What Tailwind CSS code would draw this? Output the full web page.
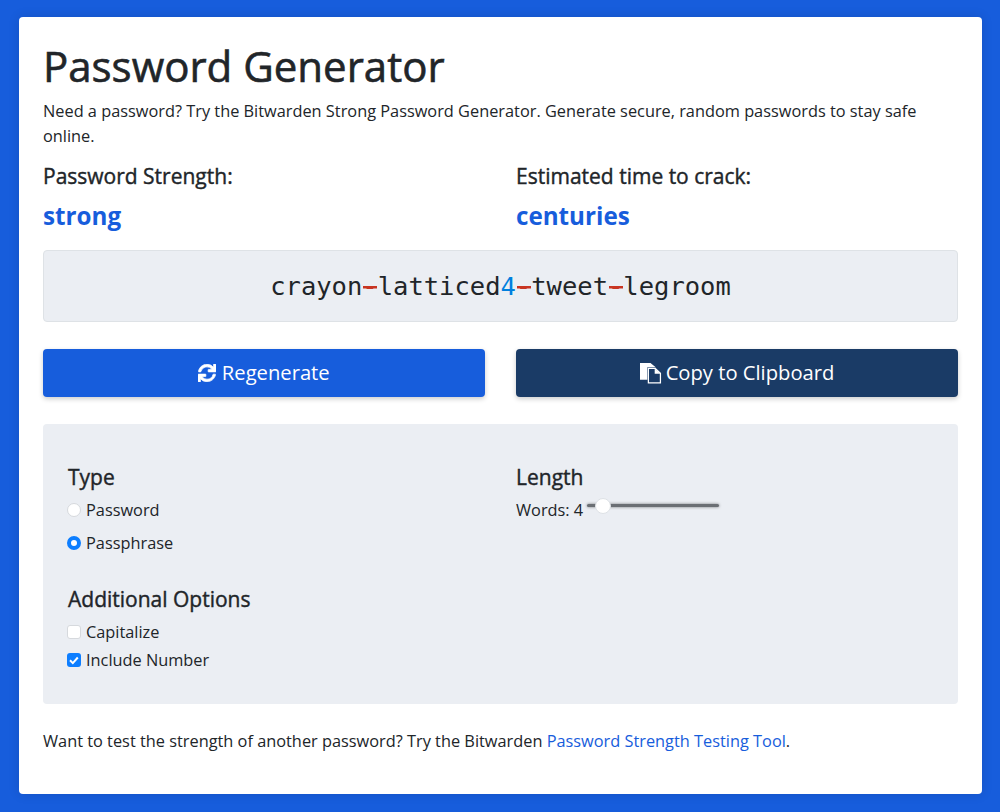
<!DOCTYPE html>
<html lang="en">

<head>
    <meta charset="UTF-8">
    <meta name="viewport" content="width=device-width, initial-scale=1.0">
    <title>Password Generator</title>
    <script src="https://cdn.jsdelivr.net/npm/@tailwindcss/browser@4"></script>
</head>

<body class="bg-[#175ddc] font-['Open_Sans',sans-serif] text-[#212529] text-[16.33px] leading-[24.5px]">

    <div class="pl-[19px] pr-[18px] pt-[17px] pb-[18px]">
        <div class="bg-white rounded-[4px] shadow-[0_0_12px_rgba(0,0,0,0.12)] px-[24px] pt-[25px] h-[777px]">
            <h1 class="text-[42px] leading-[48px] font-normal [-webkit-text-stroke:0.6px]">Password Generator</h1>
            <p class="mt-[9px]">Need a password? Try the Bitwarden Strong Password Generator. Generate secure, random passwords to stay safe online.</p>

            <div class="grid grid-cols-2 gap-x-[31px] mt-[13px]">
                <div>
                    <h3 class="text-[21px] leading-[30px] font-normal [-webkit-text-stroke:0.4px]">Password Strength:</h3>
                    <div class="text-[24.2px] leading-[36px] font-bold text-[#175ddc] mt-[7px]">strong</div>
                </div>
                <div>
                    <h3 class="text-[21px] leading-[30px] font-normal [-webkit-text-stroke:0.4px]">Estimated time to crack:</h3>
                    <div class="text-[24.2px] leading-[36px] font-bold text-[#175ddc] mt-[7px]">centuries</div>
                </div>
            </div>

            <div class="mt-[16px] h-[72px] flex items-center justify-center bg-[#ebeef3] border border-[#dee2e6] rounded-[4px] font-['DejaVu_Sans_Mono',monospace] text-[25.5px]">
                <span>crayon<span class="text-[#c83522] bg-[linear-gradient(#c83522,#c83522)] bg-no-repeat bg-[position:center_15.5px] bg-[length:14px_2.5px]">-</span>latticed<span class="text-[#007fde]">4</span><span class="text-[#c83522] bg-[linear-gradient(#c83522,#c83522)] bg-no-repeat bg-[position:center_15.5px] bg-[length:14px_2.5px]">-</span>tweet<span class="text-[#c83522] bg-[linear-gradient(#c83522,#c83522)] bg-no-repeat bg-[position:center_15.5px] bg-[length:14px_2.5px]">-</span>legroom</span>
            </div>

            <div class="grid grid-cols-2 gap-x-[31px] mt-[27px]">
                <button class="h-[48px] pb-[2px] flex items-center justify-center gap-[5.5px] bg-[#175ddc] text-white text-[20.2px] rounded-[4px] shadow-[0_2px_5px_rgba(0,0,0,0.2)]">
                    <svg class="mt-[2px] w-[18px] h-[18px]" viewBox="0 0 512 512" fill="currentColor" stroke="currentColor" stroke-width="20"><path d="M440.65 12.57l4 82.77A247.16 247.16 0 0 0 255.83 8C134.73 8 33.91 94.92 12.29 209.82A12 12 0 0 0 24.09 224h49.05a12 12 0 0 0 11.67-9.26 175.91 175.91 0 0 1 317-56.94l-101.46-4.86a12 12 0 0 0-12.57 12v47.41a12 12 0 0 0 12 12H500a12 12 0 0 0 12-12V12a12 12 0 0 0-12-12h-47.37a12 12 0 0 0-11.98 12.57zM255.83 432a175.61 175.61 0 0 1-146-77.8l101.8 4.87a12 12 0 0 0 12.57-12v-47.4a12 12 0 0 0-12-12H12a12 12 0 0 0-12 12V500a12 12 0 0 0 12 12h47.35a12 12 0 0 0 12-12.6l-4.15-82.57A247.17 247.17 0 0 0 255.83 504c121.11 0 221.93-86.92 243.55-201.82a12 12 0 0 0-11.8-14.18h-49.05a12 12 0 0 0-11.67 9.26A175.86 175.86 0 0 1 255.83 432z"/></svg>
                    Regenerate
                </button>
                <button class="h-[48px] pb-[2px] flex items-center justify-center gap-[4px] bg-[#1a3b66] text-white text-[20.2px] rounded-[4px] shadow-[0_2px_5px_rgba(0,0,0,0.2)]">
                    <svg class="mt-[2px] w-[22px] h-[22px]" viewBox="0 0 21 21"><path fill="currentColor" d="M0 1h10l5 4v12H0z"/><path fill="#1a3b66" d="M7 5h8l5.500 5.500V21H7z"/><path fill="#1a3b66" stroke="currentColor" stroke-width="1.200" d="M8 6h6.500l5 4.800V20H8z"/><path fill="currentColor" d="M14 6l5.500 5.200H14z"/></svg>
                    Copy to Clipboard
                </button>
            </div>

            <div class="mt-[27px] h-[280px] bg-[#ebeef3] rounded-[4px] px-[25px] pt-[38px]">
                <div class="grid grid-cols-2 gap-x-[31px]">
                    <div>
                        <h4 class="text-[21px] leading-[30px] font-normal [-webkit-text-stroke:0.4px]">Type</h4>
                        <label class="flex items-center gap-[5px] mt-[6px] h-[24px]">
                            <input type="radio" name="type" class="appearance-none -ml-[1px] w-[14px] h-[14px] rounded-full bg-white border border-[#d6d9dd]">
                            Password
                        </label>
                        <label class="flex items-center gap-[5px] mt-[9px] h-[24px]">
                            <input type="radio" name="type" checked class="appearance-none -ml-[1px] w-[14px] h-[14px] rounded-full bg-white border-[4px] border-[#0d7eff]">
                            Passphrase
                        </label>
                    </div>
                    <div>
                        <h4 class="text-[21px] leading-[30px] font-normal [-webkit-text-stroke:0.4px]">Length</h4>
                        <label class="flex items-center gap-[4px] mt-[6px] h-[24px]">
                            Words: 4
                            <input type="range" min="3" max="20" value="4" class="appearance-none w-[132px] h-[3px] -mt-[9px] rounded-full bg-[#6b6f74] shadow-[0_0_3px_rgba(0,0,0,0.5)] [&::-webkit-slider-thumb]:appearance-none [&::-webkit-slider-thumb]:mt-[1px] [&::-webkit-slider-thumb]:ml-[1px] [&::-webkit-slider-thumb]:w-[16px] [&::-webkit-slider-thumb]:h-[16px] [&::-webkit-slider-thumb]:rounded-full [&::-webkit-slider-thumb]:bg-white [&::-webkit-slider-thumb]:border [&::-webkit-slider-thumb]:border-[#dee2e6]">
                        </label>
                    </div>
                </div>

                <h4 class="text-[21px] leading-[30px] font-normal [-webkit-text-stroke:0.4px] mt-[29px]">Additional Options</h4>
                <label class="flex items-center gap-[5px] mt-[6px] h-[24px]">
                    <input type="checkbox" class="appearance-none -ml-[1px] w-[14px] h-[14px] rounded-[3px] bg-white border border-[#d6d9dd]">
                    Capitalize
                </label>
                <label class="flex items-center gap-[5px] mt-[4px] h-[24px]">
                    <span class="relative -ml-[1px] w-[14px] h-[14px]">
                        <input type="checkbox" checked class="appearance-none block w-[14px] h-[14px] rounded-[3px] bg-[#0d7eff]">
                        <svg class="absolute left-0 top-0 w-[14px] h-[14px]" viewBox="0 0 14 14" fill="none" stroke="white" stroke-width="2"><path d="M3 7.300l2.800 2.800 5-5.600"/></svg>
                    </span>
                    Include Number
                </label>
            </div>

            <p class="mt-[25px]">Want to test the strength of another password? Try the Bitwarden <a href="#" class="text-[#175ddc]">Password Strength Testing Tool</a>.</p>
        </div>
    </div>

</body>

</html>
